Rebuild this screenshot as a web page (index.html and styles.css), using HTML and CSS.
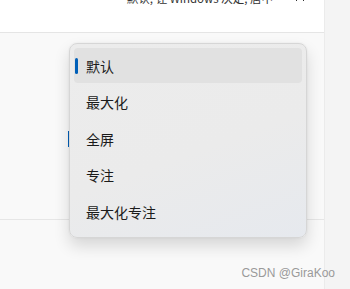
FILE: index.html
```html
<!DOCTYPE html>
<html lang="zh">
<head>
<meta charset="utf-8">
<link rel="stylesheet" href="styles.css">
</head>
<body>
<div class="page">
  <div class="main">
    <div class="header">
      <span class="header-text">默认, 让 Windows 决定, 居中</span>
      <svg class="chev" width="10" height="10" viewBox="0 0 10 10"><path d="M1 7 L5 3 L9 7" fill="none" stroke="#333" stroke-width="1"/></svg>
    </div>
    <div class="content">
      <div class="under-indicator"></div>
    </div>
    <div class="footer"></div>
  </div>
  <div class="strip"></div>
</div>
<div class="menu">
  <div class="item selected"><span class="bar"></span>默认</div>
  <div class="item">最大化</div>
  <div class="item">全屏</div>
  <div class="item">专注</div>
  <div class="item">最大化专注</div>
</div>
<span class="watermark">CSDN @GiraKoo</span>
</body>
</html>
```
FILE: styles.css
```css
html, body {
  margin: 0;
  padding: 0;
  width: 350px;
  height: 289px;
  overflow: hidden;
  font-family: "Noto Sans CJK SC", "Noto Sans", sans-serif;
  color: #1b1b1b;
}
.page {
  display: flex;
  height: 289px;
  background: #f9f9f9;
}
.main {
  width: 324px;
  display: flex;
  flex-direction: column;
}
.strip {
  flex: 1;
  background: #f4f4f4;
  border-left: 1px solid #ebebeb;
}
.header {
  height: 32px;
  background: #ffffff;
  border-bottom: 1px solid #e5e5e5;
  display: flex;
  align-items: flex-start;
  justify-content: flex-end;
  padding-right: 19px;
  gap: 22px;
  overflow: hidden;
}
.header-text {
  font-size: 11.5px;
  line-height: 14px;
  margin-top: -9px;
  color: #333;
}
.chev {
  margin-top: -6px;
}
.content {
  height: 186px;
  border-bottom: 1px solid #e6e6e6;
  position: relative;
}
.under-indicator {
  position: absolute;
  left: 68px;
  top: 98px;
  width: 2px;
  height: 16px;
  background: #005fb8;
}
.footer {
  flex: 1;
}
.watermark {
  position: absolute;
  right: 15px;
  top: 266px;
  font-family: "Liberation Sans", Arial, sans-serif;
  font-size: 12px;
  color: #9a9a9a;
  line-height: 14px;
}
.menu {
  position: absolute;
  left: 69px;
  top: 43px;
  width: 238px;
  height: 195px;
  box-sizing: border-box;
  padding: 4px 4px;
  border: 1px solid #d6d6d6;
  border-radius: 8px;
  background: linear-gradient(160deg, #ececec 0%, #ebebeb 55%, #e6e9ee 100%);
  box-shadow: 0 8px 16px rgba(0,0,0,0.14), 0 0 2px rgba(0,0,0,0.08);
  display: flex;
  flex-direction: column;
  gap: 1.5px;
}
.item {
  position: relative;
  height: 35px;
  display: flex;
  align-items: center;
  padding-left: 12px;
  font-size: 14px;
  border-radius: 4px;
  color: #1b1b1b;
}
.item.selected {
  background: #e1e1e1;
}
.bar {
  position: absolute;
  left: 1px;
  top: 10px;
  width: 3px;
  height: 16px;
  border-radius: 2px;
  background: #005fb8;
}
```
